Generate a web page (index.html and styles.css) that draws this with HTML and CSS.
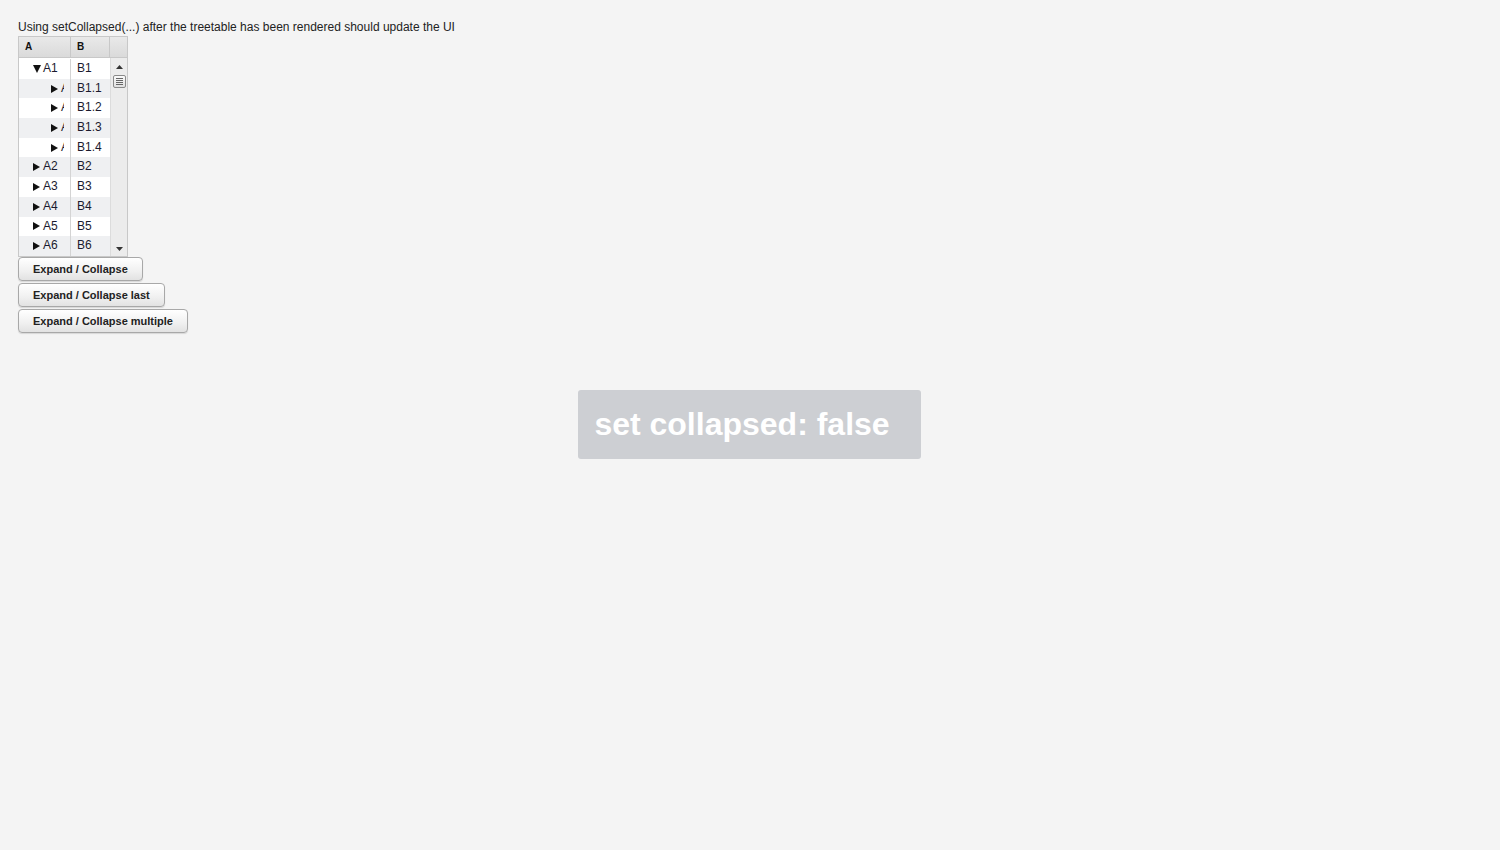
FILE: index.html
```html
<!DOCTYPE html>
<html>
<head>
<meta charset="utf-8">
<link rel="stylesheet" href="styles.css">
</head>
<body>
<div class="page">
  <div class="title">Using setCollapsed(...) after the treetable has been rendered should update the UI</div>
  <div class="tree">
    <div class="head">
      <div class="hcell">A</div>
      <div class="hcell">B</div>
      <div class="hcell hscroll"></div>
    </div>
    <div class="body">
      <div class="rows">
        <div class="row"><div class="cell a l0"><div class="clip"><svg class="tri down" width="8" height="8" viewBox="0 0 8 8"><path d="M0 0 H8 L4 8 Z"/></svg>A1</div></div><div class="cell b">B1</div></div>
        <div class="row alt"><div class="cell a l1"><div class="clip"><svg class="tri" width="7" height="8" viewBox="0 0 7 8"><path d="M0 0 V8 L7 4 Z"/></svg>A1.1</div></div><div class="cell b">B1.1</div></div>
        <div class="row"><div class="cell a l1"><div class="clip"><svg class="tri" width="7" height="8" viewBox="0 0 7 8"><path d="M0 0 V8 L7 4 Z"/></svg>A1.2</div></div><div class="cell b">B1.2</div></div>
        <div class="row alt"><div class="cell a l1"><div class="clip"><svg class="tri" width="7" height="8" viewBox="0 0 7 8"><path d="M0 0 V8 L7 4 Z"/></svg>A1.3</div></div><div class="cell b">B1.3</div></div>
        <div class="row"><div class="cell a l1"><div class="clip"><svg class="tri" width="7" height="8" viewBox="0 0 7 8"><path d="M0 0 V8 L7 4 Z"/></svg>A1.4</div></div><div class="cell b">B1.4</div></div>
        <div class="row alt"><div class="cell a l0"><div class="clip"><svg class="tri" width="7" height="8" viewBox="0 0 7 8"><path d="M0 0 V8 L7 4 Z"/></svg>A2</div></div><div class="cell b">B2</div></div>
        <div class="row"><div class="cell a l0"><div class="clip"><svg class="tri" width="7" height="8" viewBox="0 0 7 8"><path d="M0 0 V8 L7 4 Z"/></svg>A3</div></div><div class="cell b">B3</div></div>
        <div class="row alt"><div class="cell a l0"><div class="clip"><svg class="tri" width="7" height="8" viewBox="0 0 7 8"><path d="M0 0 V8 L7 4 Z"/></svg>A4</div></div><div class="cell b">B4</div></div>
        <div class="row"><div class="cell a l0"><div class="clip"><svg class="tri" width="7" height="8" viewBox="0 0 7 8"><path d="M0 0 V8 L7 4 Z"/></svg>A5</div></div><div class="cell b">B5</div></div>
        <div class="row alt"><div class="cell a l0"><div class="clip"><svg class="tri" width="7" height="8" viewBox="0 0 7 8"><path d="M0 0 V8 L7 4 Z"/></svg>A6</div></div><div class="cell b">B6</div></div>
      </div>
      <div class="scroll">
        <svg class="arrow" width="7" height="4" viewBox="0 0 7 4"><path d="M0 4 L3.5 0 L7 4 Z" fill="#333"/></svg>
        <div class="thumb"><span></span><span></span><span></span><span></span></div>
        <div class="spacer"></div>
        <svg class="arrow" width="7" height="4" viewBox="0 0 7 4"><path d="M0 0 L7 0 L3.5 4 Z" fill="#333"/></svg>
      </div>
    </div>
  </div>
  <div class="buttons">
    <button class="btn">Expand / Collapse</button>
    <button class="btn">Expand / Collapse last</button>
    <button class="btn">Expand / Collapse multiple</button>
  </div>
</div>
<div class="overlay"><div class="label">set collapsed: false</div></div>
</body>
</html>
```
FILE: styles.css
```css
html, body {
  margin: 0;
  padding: 0;
  background: #f4f4f4;
  font-family: "Liberation Sans", Arial, sans-serif;
  color: #222;
}
.page {
  padding: 20px 18px;
}
.title {
  font-size: 12px;
  line-height: 14px;
  height: 16px;
  color: #222;
}
.tree {
  width: 108px;
  border: 1px solid #c8c8c8;
  background: #fff;
}
.head {
  display: grid;
  grid-template-columns: 52px 39px 17px;
  height: 20px;
  background: linear-gradient(#e9e9e9, #dadada);
  border-bottom: 1px solid #c8c8c8;
}
.hcell {
  font-size: 10px;
  font-weight: bold;
  line-height: 20px;
  padding-left: 6px;
  border-right: 1px solid #c8c8c8;
  color: #111;
}
.hcell.hscroll {
  border-right: none;
  padding: 0;
}
.body {
  display: flex;
}
.rows {
  width: 91px;
  padding-top: 1px;
  background: #fff;
}
.row {
  display: grid;
  grid-template-columns: 52px 39px;
  height: 19.7px;
  background: #fff;
}
.row.alt {
  background: #eff0f2;
}
.cell {
  font-size: 12px;
  line-height: 19.7px;
  white-space: nowrap;
  color: #1a1a2e;
}
.cell.a {
  border-right: 1px solid #d4d4d4;
  padding-right: 6px;
  min-width: 0;
}
.clip {
  overflow: hidden;
  white-space: nowrap;
  display: flex;
  align-items: center;
  height: 100%;
}
.cell.a.l0 .clip { padding-left: 14px; }
.cell.a.l1 .clip { padding-left: 32px; }
.tri {
  flex: none;
  fill: #111;
  margin-right: 3px;
}
.tri.down {
  margin-right: 2px;
}
.cell.b {
  padding-left: 6px;
}
.scroll {
  width: 16px;
  background: #ececec;
  border-left: 1px solid #dcdcdc;
  display: flex;
  flex-direction: column;
  align-items: center;
  padding: 7px 0 5px;
}
.arrow {
  display: block;
  flex: none;
}
.thumb {
  margin-top: 6px;
  width: 11px;
  height: 11px;
  border: 1px solid #8a8a8a;
  border-radius: 2px;
  background: linear-gradient(#fafafa, #e0e0e0);
  display: flex;
  flex-direction: column;
  justify-content: center;
  align-items: center;
  gap: 1px;
}
.thumb span {
  display: block;
  width: 7px;
  height: 1px;
  background: #666;
}
.spacer { flex: 1; }
.buttons {
  display: flex;
  flex-direction: column;
  align-items: flex-start;
  gap: 2px;
  margin-top: 0;
}
.btn {
  font-family: "Liberation Sans", Arial, sans-serif;
  font-size: 11px;
  font-weight: bold;
  color: #222;
  height: 24px;
  padding: 0 14px;
  border: 1px solid #a8a8a8;
  border-radius: 4px;
  background: linear-gradient(#ffffff, #f0f0f0 60%, #e2e2e2);
  box-shadow: 0 1px 1px rgba(0,0,0,0.12);
  margin: 0;
}
.overlay {
  position: fixed;
  inset: 0;
  display: flex;
  align-items: center;
  justify-content: center;
  pointer-events: none;
}
.label {
  background: #cdcfd3;
  color: #fff;
  font-size: 32px;
  font-weight: bold;
  border-radius: 3px;
  padding: 15px 31px 16px 16px;
  line-height: 38px;
  margin-top: -1px;
  margin-left: -1px;
}
```
